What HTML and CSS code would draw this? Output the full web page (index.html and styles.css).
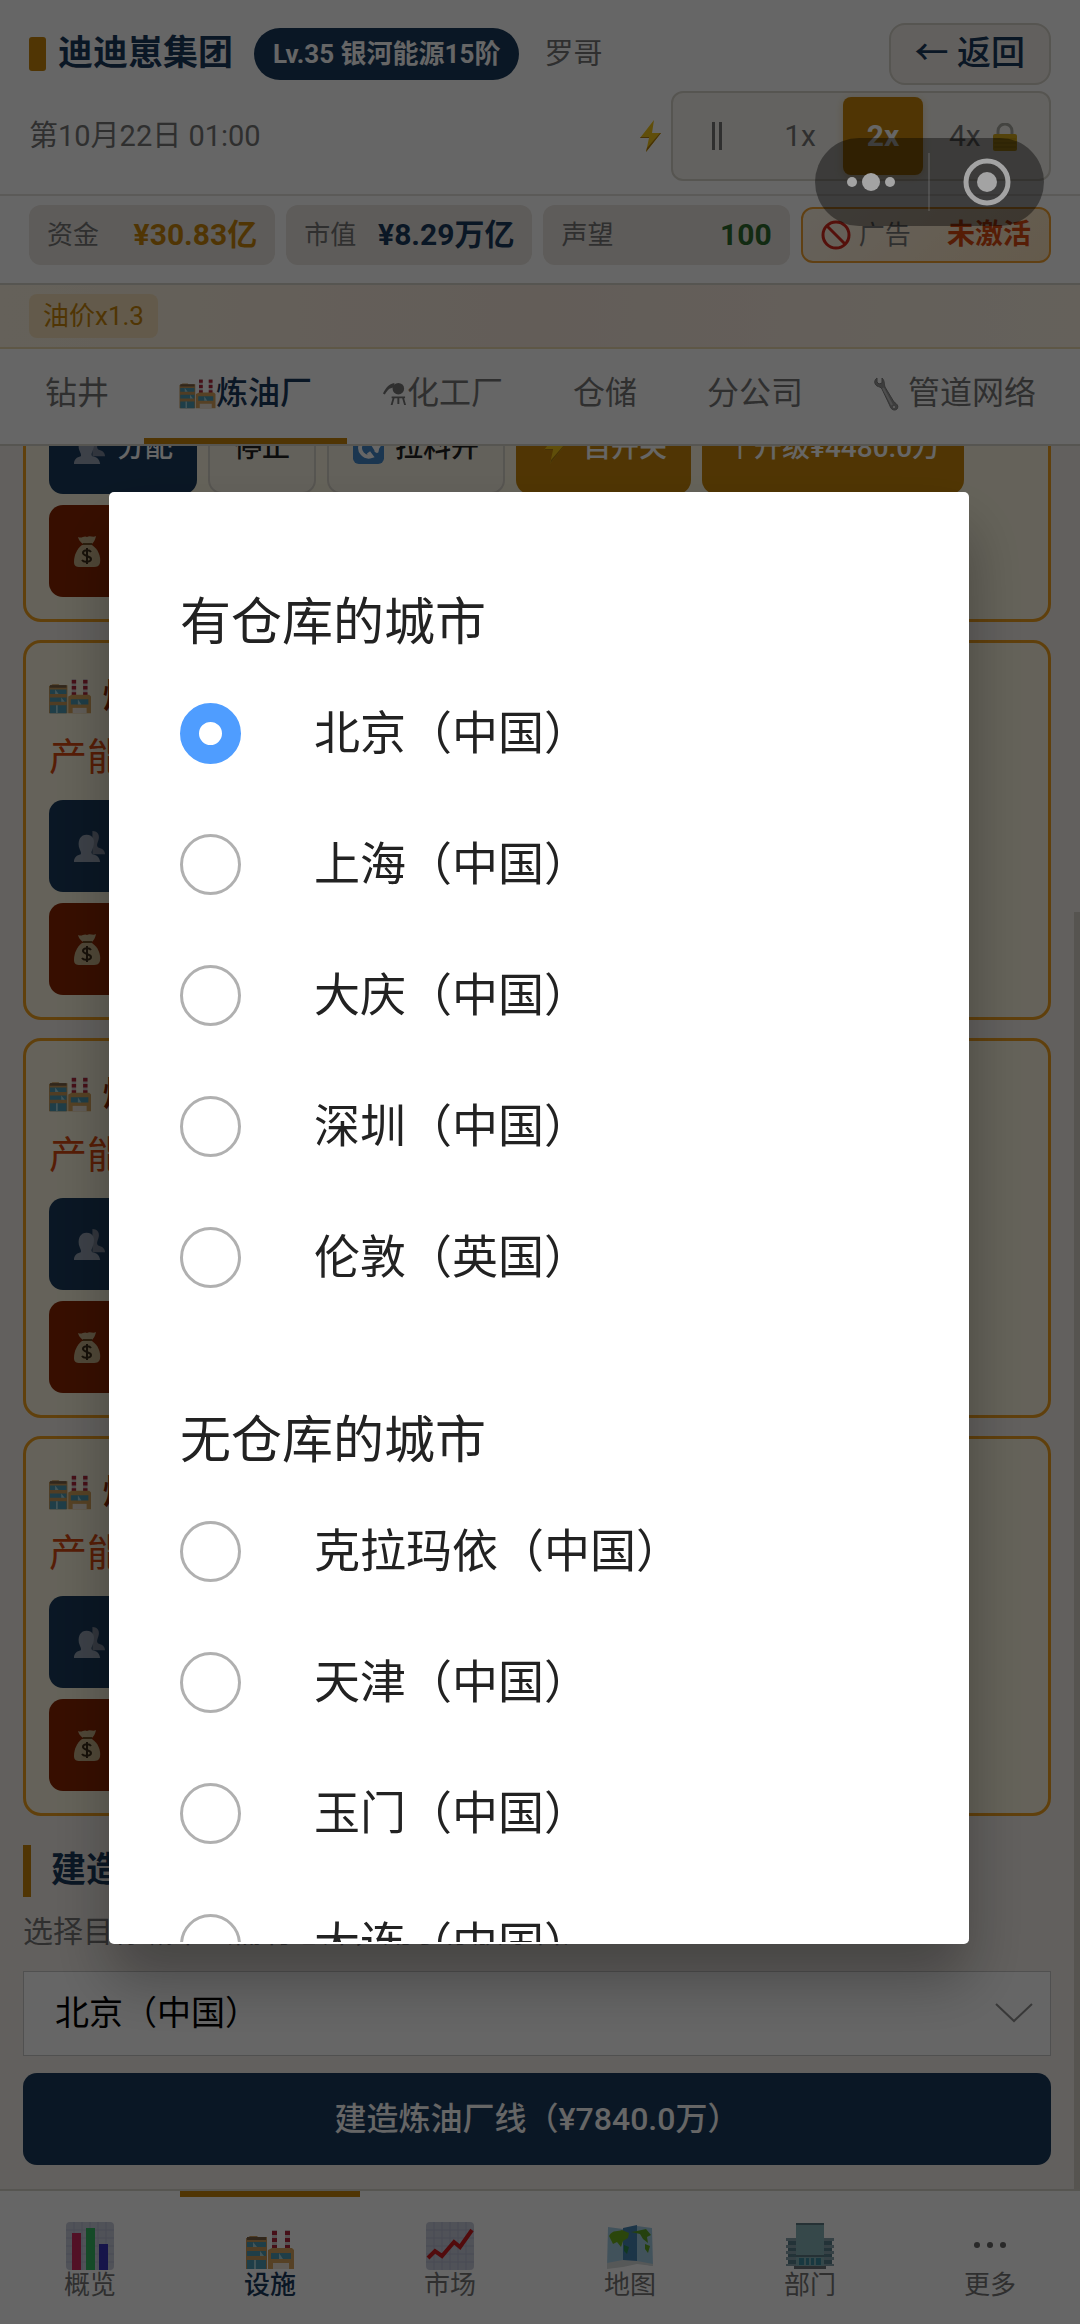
FILE: index.html
```html
<!DOCTYPE html>
<html lang="zh-CN">
<head>
    <meta charset="UTF-8">
    <meta name="viewport" content="width=device-width, initial-scale=1.0">
    <title>迪迪崽集团</title>
    <link rel="stylesheet" href="styles.css">
</head>
<body>
    <svg class="sprite" aria-hidden="true">
        <symbol id="i-factory" viewBox="0 0 48 40">
            <path d="M26 0h5v19h-5zM39 0h5v19h-5z" fill="#d8cccc"/>
            <path d="M26 1h5v4h-5zM26 8h5v4h-5zM26 15h5v4h-5zM39 1h5v4h-5zM39 8h5v4h-5zM39 15h5v4h-5z" fill="#b0283c"/>
            <path d="M1 8l3-2h7l1 1h9v32H0V8z" fill="#c99a5a"/>
            <path d="M1 7h19v3H1z" fill="#7a6248"/>
            <path d="M22 20l4-2h20l2 2v19H22z" fill="#d6a45c"/>
            <path d="M1 12h19v5H1zM1 21h19v5H1zM1 30h19v9H1zM25 23h20v6H25z" fill="#4e9bb4"/>
            <path d="M7 12l4 5H7zM14 21l4 5h-4zM10 30v9H8v-9zM33 23l4 6h-4z" fill="#a8d4dc"/>
            <path d="M27 33h16v6H27z" fill="#efe6da"/>
        </symbol>
        <symbol id="i-flask" viewBox="0 0 26 26">
            <circle cx="17" cy="8" r="6"/>
            <path d="M13 2C7 3 4 7 1 13l2 1c3-5 5-7 9-7zM10 16h14v2H10zM11 18h2l-2 7H9zM16 18h2v6h-2zM21 18h2l2 7h-2z"/>
        </symbol>
        <symbol id="i-wrench" viewBox="0 0 26 36">
            <path d="M4 2C1 4 1 8 4 10c2 1 4 1 5 3l8 17c1 4 5 5 7 3 2-3 0-5-3-7L12 11c-1-3 0-6-3-9v5L6 8 4 6z" fill="#9a9a9a" stroke="#808080"/>
            <path d="M10 12l9 17" stroke="#c4c4c4" stroke-width="2"/>
            <circle cx="21" cy="31" r="1" fill="#fff"/>
        </symbol>
        <symbol id="i-bolt" viewBox="0 0 22 32">
            <path d="M14 0L0 18h9L6 32l15-19h-9z" fill="#f0c419"/>
            <path d="M0 18h9v-1H1zM6 32l15-19h-1L7 28z" fill="#b07c10"/>
        </symbol>
        <symbol id="i-lock" viewBox="0 0 24 28">
            <path d="M5 14V8a7 7 0 0 1 14 0v6" fill="none" stroke="#a9a9a0" stroke-width="3"/>
            <rect y="11" width="24" height="17" rx="2" fill="#d3a91c"/>
            <path d="M1 16h22M1 20h22M1 24h22" stroke="#b98f10"/>
        </symbol>
        <symbol id="i-ban" viewBox="0 0 30 30">
            <circle cx="15" cy="15" r="13" fill="none" stroke="#d3281c" stroke-width="3"/>
            <path d="M6 6l18 18" stroke="#d3281c" stroke-width="3"/>
        </symbol>
        <symbol id="i-user" viewBox="0 0 34 34">
            <path d="M20 1c6 0 8 5 6 10-1 3-2 5 0 7 4 1 7 3 7 7H20z" fill="#7c8698"/>
            <path d="M14 5c7 0 9 6 7 12-1 4-3 6-1 8 4 1 7 2 8 8H1c0-5 3-7 7-8 1-2-1-4-2-8C5 10 8 5 14 5z" fill="#98a3b5"/>
        </symbol>
        <symbol id="i-bag" viewBox="0 0 28 32">
            <path d="M5 2c4 2 6-2 9 0 3-2 6 1 9-1-1 5-3 7-4 8h-9C8 7 6 6 5 2z" fill="#c9b48c"/>
            <path d="M9 10h10c6 4 9 11 8 18-1 3-3 4-6 4H7c-4 0-6-1-6-5 0-7 3-13 8-17z" fill="#c9b48c"/>
            <path d="M10 9h9" stroke="#6b4b22" stroke-width="2"/>
            <path d="M18 17c-2-3-8-2-8 1s8 3 8 6-7 4-9 1M14 13v16" fill="none" stroke="#3c2c18" stroke-width="2"/>
        </symbol>
        <symbol id="i-cycle" viewBox="0 0 32 32">
            <rect width="32" height="32" rx="6" fill="#4488c8"/>
            <path d="M8 12a9 9 0 0 0 11 12l-3-4M24 20A9 9 0 0 0 13 8l3 4" fill="none" stroke="#fff" stroke-width="4"/>
            <path d="M19 13h10l-5 8z" fill="#fff"/>
        </symbol>
        <symbol id="i-bars" viewBox="0 0 48 48">
            <rect width="48" height="48" rx="4" fill="#c8ccdc"/>
            <path d="M8 0v48M16 0v48M24 0v48M32 0v48M40 0v48M0 8h48M0 16h48M0 24h48M0 32h48M0 40h48" stroke="#b6bad0"/>
            <path d="M6 11h9v37H6z" fill="#cc2c60"/>
            <path d="M20 6h9v42h-9z" fill="#36b864"/>
            <path d="M33 22h9v26h-9z" fill="#3a36b8"/>
        </symbol>
        <symbol id="i-chart" viewBox="0 0 48 48">
            <rect width="48" height="48" rx="4" fill="#c8ccdc"/>
            <path d="M8 0v48M16 0v48M24 0v48M32 0v48M40 0v48M0 8h48M0 16h48M0 24h48M0 32h48M0 40h48" stroke="#b6bad0"/>
            <path d="M2 36l7-7 7 5 12-14 6 5L46 8" fill="none" stroke="#cc1c20" stroke-width="4"/>
        </symbol>
        <symbol id="i-map" viewBox="0 0 48 44">
            <path d="M2 3l15 2v36L1 43z" fill="#a4cce4"/>
            <path d="M17 4l14-3v37l-14 4z" fill="#4884b4"/>
            <path d="M31 2l15 2 1 38-16-3z" fill="#a4cce4"/>
            <path d="M1 39l16-3 14 1 16 3v2l-16-2-14 3-16 2z" fill="#d8dcdc"/>
            <path d="M3 12c4-7 9-4 13-6l7 3-1 5-5 3-2 6-4-5-4 2z" fill="#6cb020"/>
            <path d="M18 21l5 2-2 7-3-3z" fill="#2c8c50"/>
            <path d="M31 7l9-2 5 6-4 2 1 6-5-4-3-5-9-2z" fill="#5ca424"/>
            <path d="M39 20l5 2-2 7-3-4z" fill="#5ca424"/>
        </symbol>
        <symbol id="i-building" viewBox="0 0 48 46">
            <path d="M0 15h48v3H0zM0 22h48v3H0zM0 28h48v3H0zM0 34h48v3H0zM0 41h48v2H0z" fill="#88a4ac"/>
            <path d="M2 18h44v4H2zM2 25h44v3H2zM2 31h44v3H2zM2 37h44v4H2z" fill="#58808c"/>
            <path d="M10 0h28v43H10z" fill="#88b4b8"/>
            <path d="M10 0h28v2H10zM10 32h28v2H10z" fill="#5c7c84"/>
            <path d="M13 35h5v7h-5zM20 35h3v7h-3zM25 35h3v7h-3zM30 35h5v7h-5z" fill="#3c8ca0"/>
            <path d="M8 43h32v3H8z" fill="#6c7478"/>
        </symbol>
    </svg>

    <div class="app">
        <header class="header">
            <div class="header-row">
                <h1 class="company">迪迪崽集团</h1>
                <span class="level">Lv.35 银河能源15阶</span>
                <span class="player">罗哥</span>
                <button type="button" class="back">← 返回</button>
            </div>
            <div class="header-row controls">
                <span class="date">第10月22日 01:00</span>
                <svg class="bolt"><use href="#i-bolt"/></svg>
                <div class="speed">
                    <button type="button" aria-label="暂停"><span class="pause"></span></button>
                    <button type="button">1x</button>
                    <button type="button" class="active">2x</button>
                    <button type="button" class="locked">4x <svg class="lock"><use href="#i-lock"/></svg></button>
                </div>
            </div>
        </header>

        <div class="stats">
            <div class="stat"><span>资金</span><strong class="gold">¥30.83亿</strong></div>
            <div class="stat"><span>市值</span><strong class="navy">¥8.29万亿</strong></div>
            <div class="stat"><span>声望</span><strong class="green">100</strong></div>
            <div class="stat ad"><svg class="ban"><use href="#i-ban"/></svg><span>广告</span><strong>未激活</strong></div>
        </div>

        <div class="events"><span class="event">油价x1.3</span></div>

        <nav class="tabs">
            <a href="#">钻井</a>
            <a href="#" class="active"><svg class="tab-factory"><use href="#i-factory"/></svg>炼油厂</a>
            <a href="#"><svg class="tab-flask"><use href="#i-flask"/></svg>化工厂</a>
            <a href="#">仓储</a>
            <a href="#">分公司</a>
            <a href="#"><svg class="tab-wrench"><use href="#i-wrench"/></svg>管道网络</a>
        </nav>

        <main class="content">
            <section class="card">
                <div class="actions">
                    <button type="button" class="btn primary"><svg class="user"><use href="#i-user"/></svg>分配</button>
                    <button type="button" class="btn plain">停止</button>
                    <button type="button" class="btn plain"><svg class="cycle"><use href="#i-cycle"/></svg>拉料开</button>
                    <button type="button" class="btn gold-btn"><svg class="bolt"><use href="#i-bolt"/></svg>自开关</button>
                    <button type="button" class="btn gold-btn">↑升级¥4480.0万</button>
                    <button type="button" class="btn danger"><svg class="bag"><use href="#i-bag"/></svg>出售</button>
                </div>
            </section>
            <section class="card">
                <h3><svg class="factory"><use href="#i-factory"/></svg>炼油</h3>
                <p>产能</p>
                <div class="actions column">
                    <button type="button" class="btn primary"><svg class="user"><use href="#i-user"/></svg>分配</button>
                    <button type="button" class="btn danger"><svg class="bag"><use href="#i-bag"/></svg>出售</button>
                </div>
            </section>
            <section class="card">
                <h3><svg class="factory"><use href="#i-factory"/></svg>炼油</h3>
                <p>产能</p>
                <div class="actions column">
                    <button type="button" class="btn primary"><svg class="user"><use href="#i-user"/></svg>分配</button>
                    <button type="button" class="btn danger"><svg class="bag"><use href="#i-bag"/></svg>出售</button>
                </div>
            </section>
            <section class="card">
                <h3><svg class="factory"><use href="#i-factory"/></svg>炼油</h3>
                <p>产能</p>
                <div class="actions column">
                    <button type="button" class="btn primary"><svg class="user"><use href="#i-user"/></svg>分配</button>
                    <button type="button" class="btn danger"><svg class="bag"><use href="#i-bag"/></svg>出售</button>
                </div>
            </section>

            <h2 class="build-title">建造炼油厂</h2>
            <label class="build-label" for="city">选择目标城市（需有仓库，用于存放原料）</label>
            <div class="select-box">
                <select id="city">
                    <option>北京（中国）</option>
                    <option>上海（中国）</option>
                    <option>大庆（中国）</option>
                    <option>深圳（中国）</option>
                    <option>伦敦（英国）</option>
                </select>
                <svg class="chevron" viewBox="0 0 38 20"><path d="M1 1l18 17L37 1" fill="none" stroke="#8c8c8c" stroke-width="2"/></svg>
            </div>
            <button type="button" class="btn primary build">建造炼油厂线（¥7840.0万）</button>
            <div class="scrollbar"></div>
        </main>

        <nav class="bottom-nav">
            <a href="#"><svg><use href="#i-bars"/></svg>概览</a>
            <a href="#" class="active"><svg><use href="#i-factory" y="4"/></svg>设施</a>
            <a href="#"><svg><use href="#i-chart"/></svg>市场</a>
            <a href="#"><svg><use href="#i-map"/></svg>地图</a>
            <a href="#"><svg><use href="#i-building"/></svg>部门</a>
            <a href="#"><svg viewBox="0 0 48 48"><g fill="#666"><circle cx="11" cy="23" r="3"/><circle cx="24" cy="23" r="3"/><circle cx="37" cy="23" r="3"/></g></svg>更多</a>
        </nav>
    </div>

    <div class="overlay">
        <div class="dialog" role="dialog">
            <fieldset>
                <legend>有仓库的城市</legend>
                <label class="option"><input type="radio" name="target" checked>北京（中国）</label>
                <label class="option"><input type="radio" name="target">上海（中国）</label>
                <label class="option"><input type="radio" name="target">大庆（中国）</label>
                <label class="option"><input type="radio" name="target">深圳（中国）</label>
                <label class="option"><input type="radio" name="target">伦敦（英国）</label>
            </fieldset>
            <fieldset>
                <legend>无仓库的城市</legend>
                <label class="option"><input type="radio" name="target">克拉玛依（中国）</label>
                <label class="option"><input type="radio" name="target">天津（中国）</label>
                <label class="option"><input type="radio" name="target">玉门（中国）</label>
                <label class="option"><input type="radio" name="target">大连（中国）</label>
            </fieldset>
        </div>
    </div>

    <div class="capsule">
        <button type="button" aria-label="更多操作"><svg viewBox="0 0 48 18"><circle cx="5" cy="9" r="5"/><circle cx="24" cy="9" r="9"/><circle cx="43" cy="9" r="5"/></svg></button>
        <button type="button" aria-label="关闭"><svg viewBox="0 0 48 48"><circle cx="24" cy="24" r="21" class="ring"/><circle cx="24" cy="24" r="10"/></svg></button>
    </div>
</body>
</html>
```

FILE: styles.css
```css
* {
    box-sizing: border-box;
}
body {
    margin: 0;
    font-family: Roboto, "Noto Sans CJK SC", sans-serif;
    font-size: 31px;
    line-height: 1.4;
    color: #222;
    background-color: #f5f0eb;
}
h1, h2, h3, p, fieldset {
    margin: 0;
    padding: 0;
    border: none;
}
button {
    font-family: inherit;
    font-size: inherit;
    line-height: inherit;
    border: none;
    background: none;
    padding: 0;
    margin: 0;
    cursor: pointer;
}
a {
    color: inherit;
    text-decoration: none;
}
.sprite {
    display: none;
}
.app {
    display: flex;
    flex-direction: column;
    height: 100vh;
}

/* header */
.header {
    padding: 23px 29px 13px;
    background: #fff;
    border-bottom: 2px solid #e4e0dc;
}
.header-row {
    display: flex;
    align-items: center;
}
.controls {
    padding-top: 6px;
}
.company {
    display: flex;
    align-items: center;
    gap: 12px;
    margin-right: 21px;
    font-size: 35px;
    line-height: 52px;
    color: #1a3a5c;
}
.company::before {
    content: "";
    width: 17px;
    height: 34px;
    border-radius: 3px;
    background: #c8860a;
}
.level {
    padding: 0 19px;
    border-radius: 26px;
    background: #1a3a5c;
    color: #fff;
    font-size: 26px;
    font-weight: bold;
    line-height: 52px;
}
.player {
    margin-left: 25px;
    font-size: 29px;
    color: #777;
}
.back {
    height: 62px;
    margin-left: auto;
    padding: 0 24px;
    border: 2px solid #d8d4ca;
    border-radius: 16px;
    background: #f5f0eb;
    color: #1a3a5c;
    font-size: 34px;
    font-weight: 500;
}
.date {
    font-size: 29px;
    color: #777;
}
.bolt {
    width: 22px;
    height: 32px;
}
.header .bolt {
    margin: 0 9px 0 auto;
}
.speed {
    display: flex;
    gap: 3px;
    padding: 4px;
    border: 2px solid #d8d4ca;
    border-radius: 12px;
    background: #f8f6f0;
}
.speed button {
    width: 80px;
    height: 78px;
    border-radius: 8px;
    color: #777;
    font-size: 30px;
}
.speed .active {
    background: #c8860a;
    color: #fff;
    font-weight: bold;
    box-shadow: 0 2px 8px rgba(200, 134, 10, 0.3);
}
.speed .locked {
    width: 119px;
    padding-right: 5px;
}
.pause {
    display: block;
    width: 10px;
    height: 28px;
    margin: auto;
    border: solid #777;
    border-width: 0 3px;
}
.lock {
    width: 24px;
    height: 28px;
    margin-left: 5px;
    vertical-align: -5px;
}

/* stats */
.stats {
    display: grid;
    grid-template-columns: repeat(3, 246fr) 250fr;
    align-items: center;
    gap: 11px;
    padding: 9px 29px 18px;
    background: #fff;
    border-bottom: 2px solid #d8d4ca;
}
.stat {
    display: flex;
    align-items: center;
    justify-content: space-between;
    height: 60px;
    padding: 0 18px;
    border-radius: 12px;
    background: #ebe6e0;
    font-size: 26px;
    color: #777;
}
.stat strong {
    font-size: 30px;
}
.gold {
    color: #c8860a;
}
.navy {
    color: #1a3a5c;
}
.green {
    color: #2e6b2e;
}
.ad {
    height: 56px;
    border: 2px solid #f0a030;
    background: linear-gradient(135deg, #fdf3e4, #fbe2bd);
}
.ad span {
    margin: 0 auto 0 8px;
}
.ad strong {
    font-size: 28px;
    color: #d84a10;
}
.ban {
    width: 30px;
    height: 30px;
}

/* events */
.events {
    display: flex;
    padding: 9px 29px;
    background: linear-gradient(90deg, #fcf3e0, #f7e8dd 50%, #fcf3e4);
    border-bottom: 2px solid #ecd9ae;
}
.event {
    padding: 0 14px;
    border-radius: 8px;
    background: #f7e2bb;
    color: #c8860a;
    font-size: 26px;
    line-height: 44px;
}

/* tabs */
.tabs {
    display: flex;
    padding: 0 10px;
    background: #fff;
    border-bottom: 2px solid #d8d4ca;
    color: #777;
    font-size: 32px;
    white-space: nowrap;
}
.tabs a {
    display: flex;
    align-items: center;
    height: 95px;
    padding: 0 35px;
    padding-bottom: 6px;
}
.tabs .active {
    padding-bottom: 0;
    border-bottom: 6px solid #c8860a;
    color: #1a3a5c;
    font-weight: 500;
}
.tab-factory {
    width: 37px;
    height: 30px;
}
.tab-flask {
    width: 25px;
    height: 27px;
    fill: #777;
}
.tab-wrench {
    width: 26px;
    height: 36px;
    margin-right: 9px;
}

/* content, scrolled to its end */
.content {
    position: relative;
    flex: 1;
    display: flex;
    flex-direction: column;
    justify-content: flex-end;
    min-height: 0;
    padding: 0 29px 24px 23px;
    overflow: hidden;
}
.card {
    flex: none;
    margin-bottom: 18px;
    padding: 29px 23px 22px;
    border: 3px solid #f0a020;
    border-radius: 18px;
    background: #fcf6e0;
}
.card h3 {
    display: flex;
    align-items: center;
    gap: 12px;
    color: #8b2500;
    font-size: 34px;
    line-height: 48px;
}
.card p {
    margin: 9px 0 15px;
    color: #d84a10;
    font-size: 38px;
    line-height: 56px;
}
.factory {
    width: 42px;
    height: 35px;
}
.actions {
    display: flex;
    flex-wrap: wrap;
    gap: 11px;
}
.column {
    flex-direction: column;
    align-items: flex-start;
}
.btn {
    display: flex;
    flex: none;
    align-items: center;
    justify-content: center;
    gap: 11px;
    height: 92px;
    padding: 0 24px;
    border-radius: 14px;
    font-size: 28px;
    font-weight: 500;
    color: #fff;
}
.btn .bolt {
    margin: 0 6px 0 4px;
}
.primary {
    background: #1a3a5c;
}
.plain {
    border: 2px solid #d8d4ca;
    background: #f8f3e4;
    color: #222;
}
.gold-btn {
    background: #c8860a;
}
.danger {
    background: #8b2500;
}
.user {
    width: 33px;
    height: 33px;
}
.cycle {
    width: 31px;
    height: 31px;
}
.bag {
    width: 28px;
    height: 32px;
}
.build-title {
    margin: 11px 0 15px;
    padding-left: 20px;
    border-left: 8px solid #c8860a;
    color: #1a3a5c;
    font-size: 35px;
    line-height: 52px;
}
.build-label {
    margin-bottom: 19px;
    color: #777;
    font-size: 30px;
    line-height: 40px;
}
.select-box {
    position: relative;
    margin-bottom: 17px;
}
.select-box select {
    display: block;
    width: 100%;
    height: 85px;
    padding: 0 31px;
    border: 1px solid #c8c8c8;
    border-radius: 0;
    background: #fff;
    color: #000;
    font-family: inherit;
    font-size: 34px;
    line-height: inherit;
    appearance: none;
}
.chevron {
    position: absolute;
    top: 32px;
    right: 18px;
    width: 38px;
    height: 20px;
}
.build {
    font-size: 32px;
}
.scrollbar {
    position: absolute;
    right: 0;
    bottom: 0;
    width: 6px;
    height: 1277px;
    background: #d6d2c8;
}

/* bottom nav */
.bottom-nav {
    display: grid;
    grid-template-columns: repeat(6, 1fr);
    background: #fff;
    border-top: 2px solid #d8d4ca;
    color: #777;
    font-size: 26px;
}
.bottom-nav a {
    display: flex;
    flex-direction: column;
    align-items: center;
    height: 133px;
    padding-top: 25px;
    border-top: 6px solid transparent;
    line-height: 30px;
}
.bottom-nav .active {
    border-color: #c8860a;
    color: #1a3a5c;
    font-weight: 500;
}
.bottom-nav svg {
    width: 48px;
    height: 48px;
}

/* city picker */
.overlay {
    position: fixed;
    inset: 0;
    display: grid;
    padding: 492px 111px 380px 109px;
    background: rgba(0, 0, 0, 0.6);
}
.dialog {
    min-height: 0;
    padding: 0 71px;
    border-radius: 5px;
    border-bottom: 2px solid #fff;
    background: #fff;
    box-shadow: 0 36px 60px rgba(0, 0, 0, 0.3);
    overflow: hidden;
}
.dialog fieldset {
    padding-top: 72px;
}
.dialog fieldset:first-child {
    padding-top: 85px;
}
.dialog legend {
    float: left;
    width: 100%;
    padding: 0;
    font-size: 51px;
    line-height: 91px;
}
.option {
    display: flex;
    clear: both;
    align-items: center;
    gap: 73px;
    height: 131px;
    font-size: 46px;
}
.option input {
    width: 61px;
    height: 61px;
    margin: 0;
    border: 3px solid #b0b0b0;
    border-radius: 50%;
    background: #fff;
    appearance: none;
}
.option input:checked {
    border: 19px solid #4f9dff;
}

/* floating capsule */
.capsule {
    position: fixed;
    top: 138px;
    right: 36px;
    display: grid;
    grid-template-columns: 1fr 1fr;
    width: 229px;
    height: 88px;
    border-radius: 44px;
    background: rgba(0, 0, 0, 0.4);
}
.capsule button {
    display: flex;
    align-items: center;
    justify-content: center;
    margin: 15px 0;
}
.capsule button:first-child {
    border-right: 2px solid rgba(160, 160, 160, 0.2);
}
.capsule svg {
    width: 48px;
    fill: #a3a3a3;
}
.capsule .ring {
    fill: none;
    stroke: #a3a3a3;
    stroke-width: 5;
}
```
